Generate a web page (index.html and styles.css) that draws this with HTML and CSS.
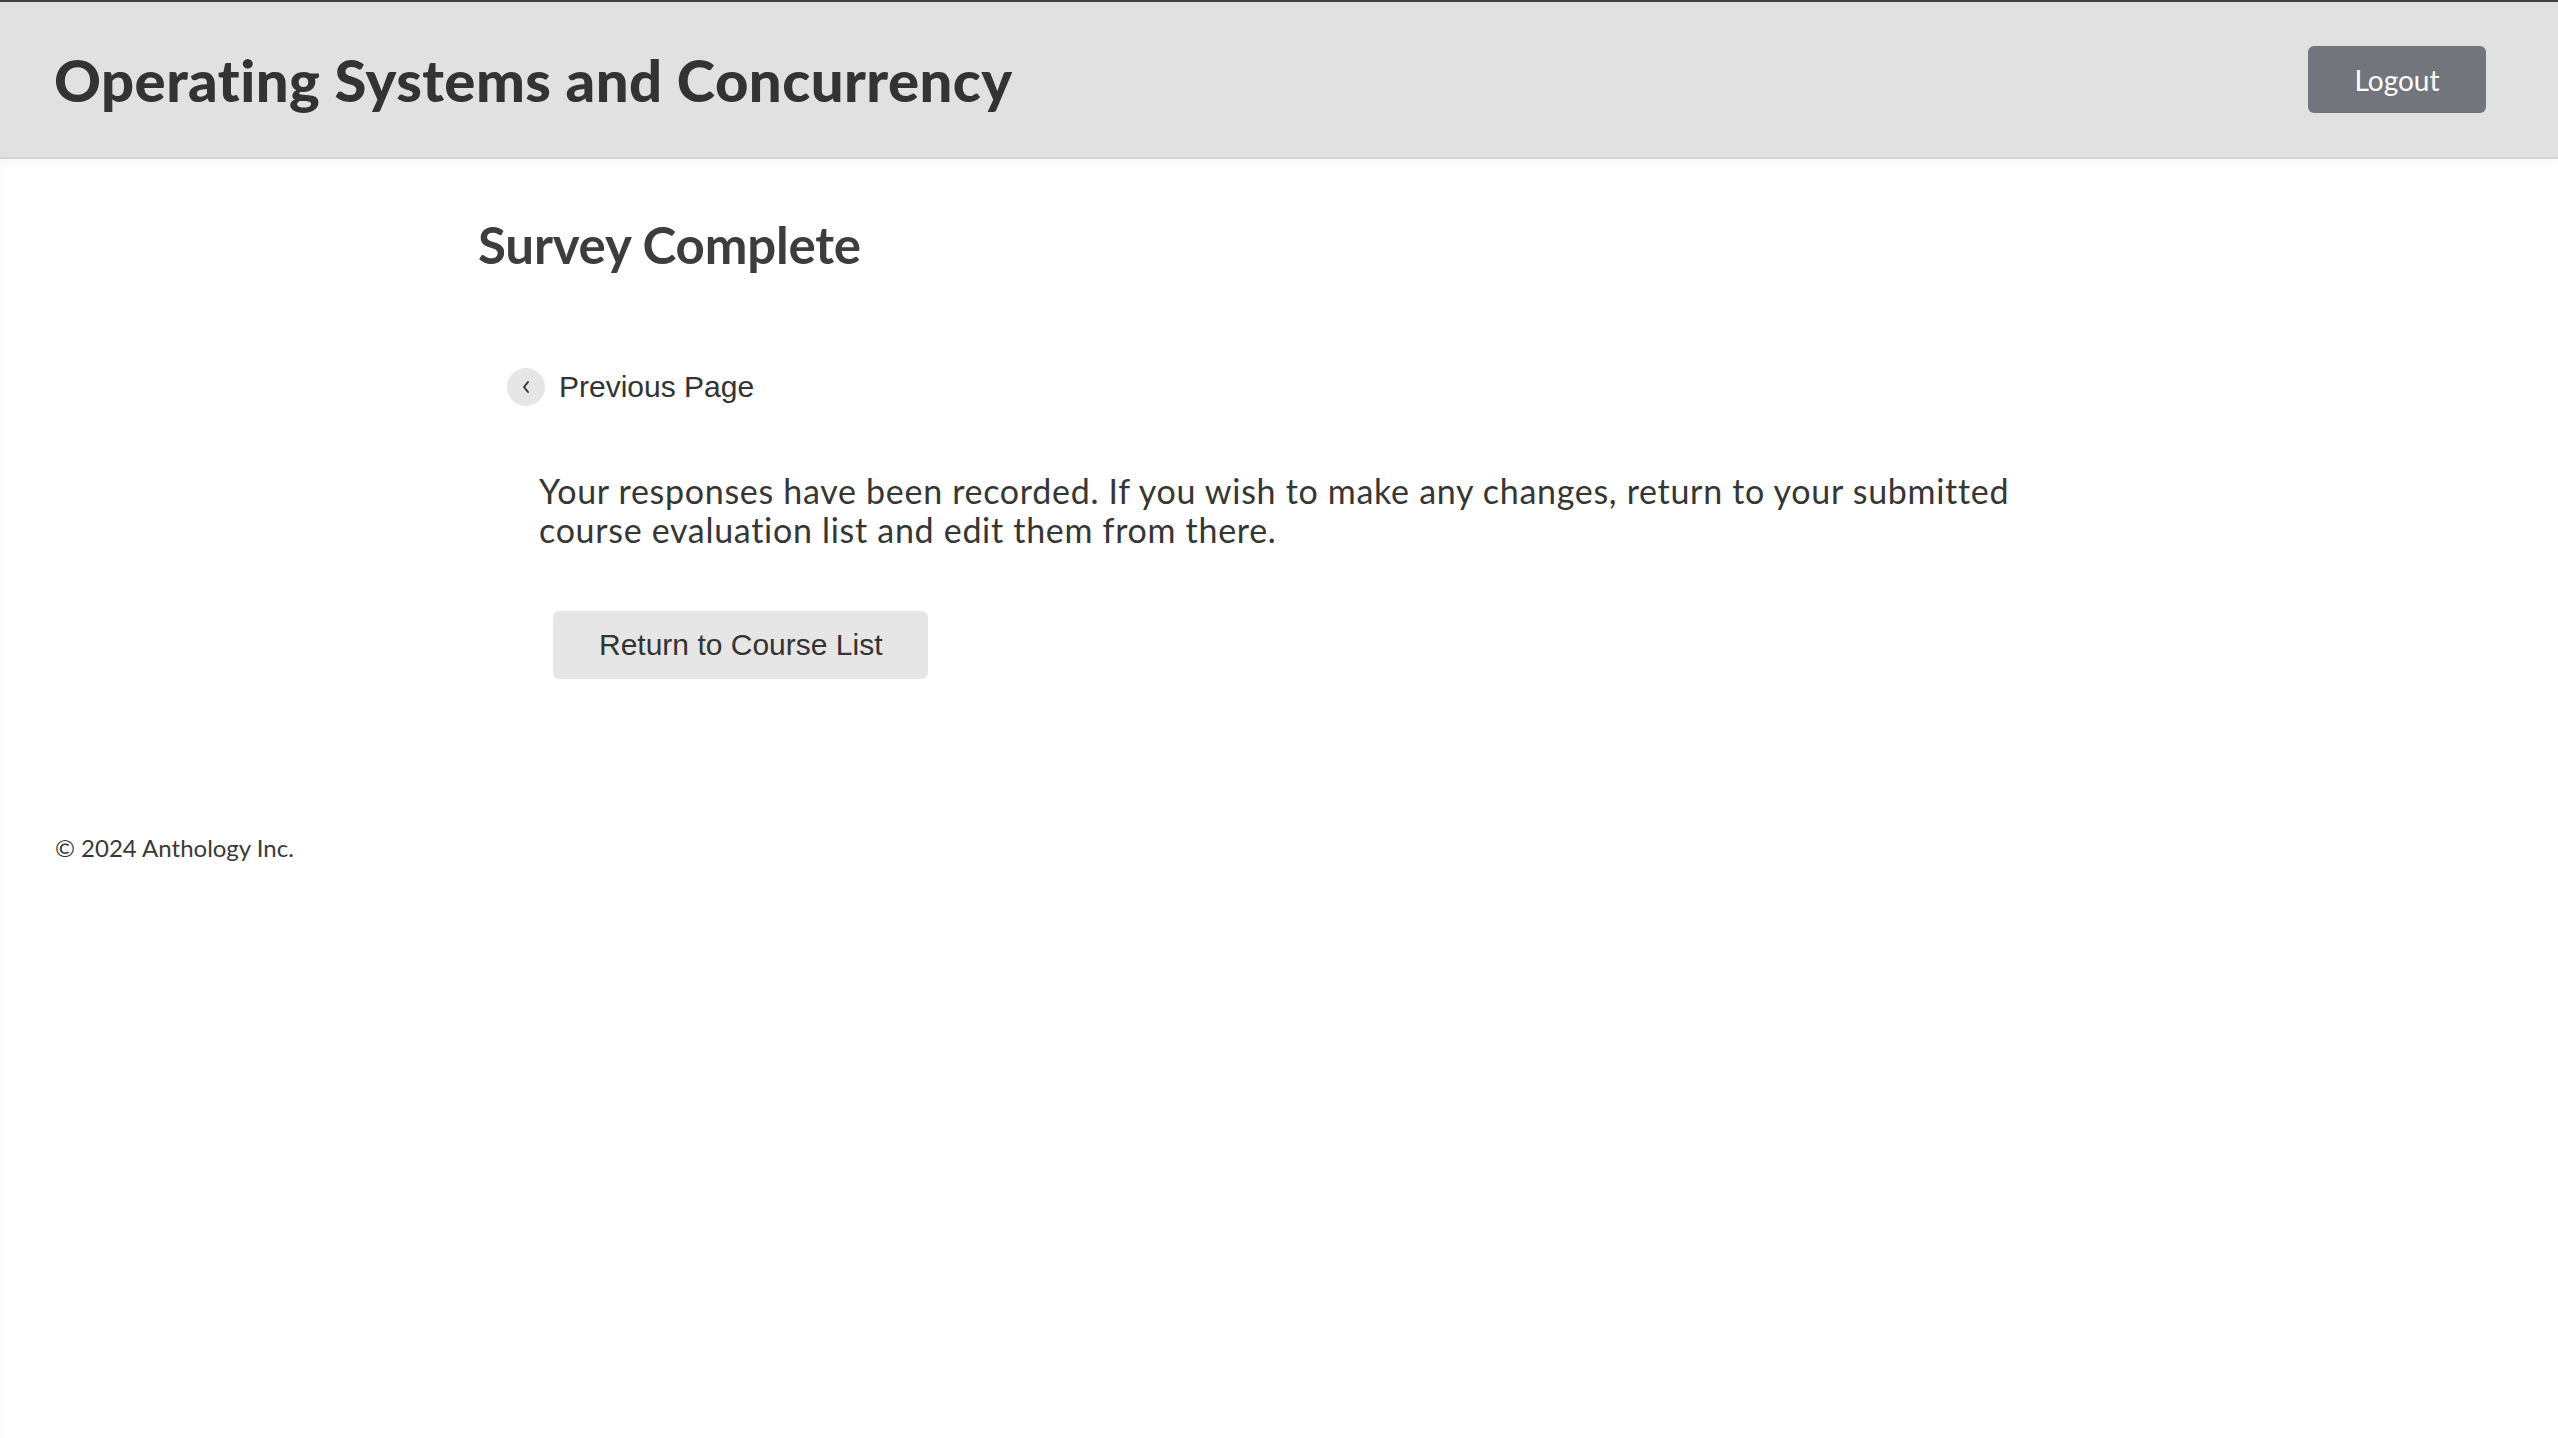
FILE: index.html
```html
<!DOCTYPE html>
<html lang="en">
<head>
<meta charset="utf-8">
<title>Survey Complete</title>
<link rel="stylesheet" href="styles.css">
</head>
<body>
<header class="topbar">
  <h1 class="course-title">Operating Systems and Concurrency</h1>
  <button class="logout-btn" type="button">Logout</button>
</header>
<main class="content">
  <h2 class="page-title">Survey Complete</h2>
  <a class="prev-link" href="#">
    <span class="prev-icon">
      <svg width="10" height="14" viewBox="0 0 10 14" aria-hidden="true"><polyline points="7,2 3,7 7,12" fill="none" stroke="#333" stroke-width="2" stroke-linecap="round" stroke-linejoin="round"/></svg>
    </span>
    <span class="prev-text">Previous Page</span>
  </a>
  <p class="message">Your responses have been recorded. If you wish to make any changes, return to your submitted course evaluation list and edit them from there.</p>
  <button class="return-btn" type="button">Return to Course List</button>
</main>
<footer class="footer">© 2024 Anthology Inc.</footer>
</body>
</html>
```

FILE: styles.css
```css
html, body {
  margin: 0;
  padding: 0;
  background: #ffffff;
}

body {
  font-family: Lato, "Liberation Sans", sans-serif;
  color: #333333;
  min-height: 1438px;
  box-shadow: inset 10px 0 12px -10px rgba(0, 0, 0, 0.04);
}

.topbar {
  display: flex;
  align-items: center;
  justify-content: space-between;
  height: 155px;
  padding: 0 72px 0 54px;
  background: #e0e1e0;
  border-top: 2px solid #3f4247;
  border-bottom: 2px solid #d4d4d4;
  box-shadow: 0 3px 10px rgba(0, 0, 0, 0.04);
}

.course-title {
  margin: 0;
  font-family: Lato, "Liberation Sans", sans-serif;
  font-weight: 900;
  font-size: 58px;
  letter-spacing: 0.45px;
  color: #333333;
  line-height: 1.2;
}

.logout-btn {
  width: 178px;
  height: 67px;
  border: 0;
  border-radius: 6px;
  background: #72767c;
  color: #ffffff;
  font-family: Lato, "Liberation Sans", sans-serif;
  font-size: 28px;
  padding: 0;
}

.content {
  display: flex;
  flex-direction: column;
  align-items: flex-start;
  padding-left: 478px;
}

.page-title {
  margin: 55px 0 0 0;
  font-family: Lato, "Liberation Sans", sans-serif;
  font-weight: 700;
  font-size: 51px;
  line-height: 1.2;
  color: #3d3d3d;
  letter-spacing: -0.2px;
}

.prev-link {
  display: flex;
  align-items: center;
  gap: 14px;
  margin: 93px 0 0 29px;
  height: 38px;
  text-decoration: none;
  color: #333333;
}

.prev-icon {
  display: flex;
  align-items: center;
  justify-content: center;
  width: 38px;
  height: 38px;
  border-radius: 50%;
  background: #e6e6e6;
}

.prev-text {
  font-family: "Liberation Sans", Arial, sans-serif;
  font-size: 30px;
  line-height: 38px;
}

.message {
  margin: 65px 0 0 61px;
  max-width: 1500px;
  font-family: Lato, "Liberation Sans", sans-serif;
  font-size: 34px;
  line-height: 39px;
  color: #363636;
  letter-spacing: 0.7px;
}

.return-btn {
  margin: 62px 0 0 75px;
  height: 68px;
  padding: 0 46px;
  border: 0;
  border-radius: 6px;
  background: #e6e6e6;
  color: #333333;
  font-family: "Liberation Sans", Arial, sans-serif;
  font-size: 30px;
  line-height: 68px;
}

.footer {
  margin-top: 155px;
  padding-left: 55px;
  font-family: Lato, "Liberation Sans", sans-serif;
  font-size: 24px;
  line-height: 1.2;
  color: #3a3a3a;
}
```
